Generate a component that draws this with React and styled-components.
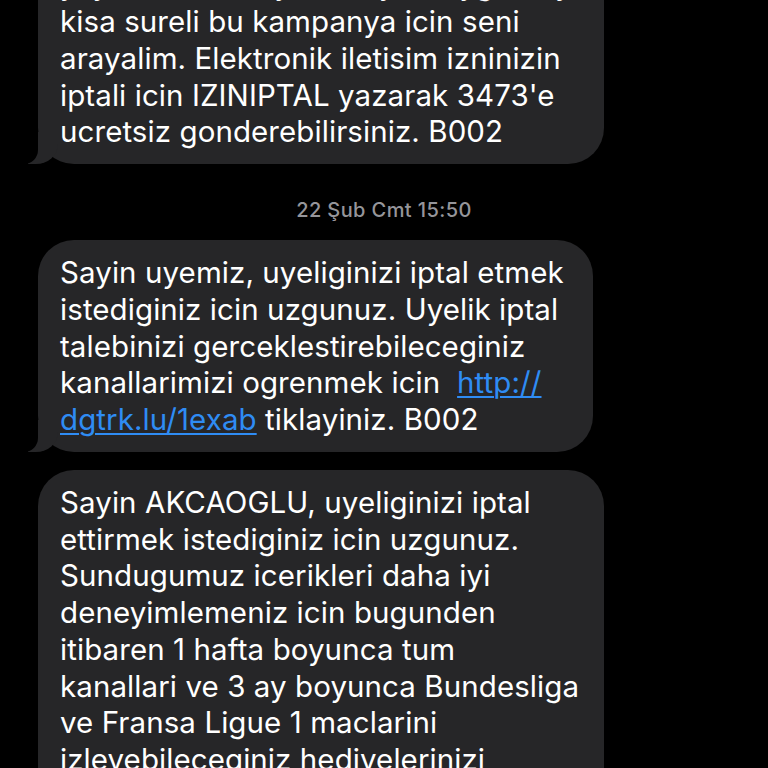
import React from "react";
import styled, { createGlobalStyle, css } from "styled-components";

const GlobalStyle = createGlobalStyle`
  html, body {
    margin: 0;
    padding: 0;
    background: #000;
  }
  body {
    font-family: Inter, "Noto Sans", "Liberation Sans", sans-serif;
    -webkit-font-smoothing: antialiased;
  }
`;

const Screen = styled.div`
  width: 768px;
  height: 768px;
  overflow: hidden;
  background: #000;
`;

const Thread = styled.div`
  display: flex;
  flex-direction: column;
  align-items: flex-start;
  margin-top: -84.5px;
`;

const tailStyles = css`
  &::before,
  &::after {
    content: "";
    position: absolute;
    bottom: 0;
    height: 32px;
  }
  &::before {
    left: -10px;
    width: 30px;
    background: #262628;
    border-bottom-right-radius: 22px 20px;
  }
  &::after {
    left: -36px;
    width: 36px;
    background: #000;
    border-bottom-right-radius: 14px;
  }
`;

const Bubble = styled.div`
  position: relative;
  box-sizing: border-box;
  width: ${(p) => p.$w}px;
  margin-left: 38px;
  margin-bottom: ${(p) => p.$mb || 0}px;
  padding: 14px 22px;
  border-radius: 36px;
  background: #262628;
  color: #fff;
  font-size: 29.5px;
  letter-spacing: 0.08px;
  line-height: 36.75px;
  white-space: nowrap;
  ${(p) => p.$tail && tailStyles}
`;

const Line = styled.div``;

const Link = styled.span`
  color: #2f8cf4;
  text-decoration: underline;
  text-decoration-thickness: 2px;
  text-underline-offset: 3px;
`;

const Stamp = styled.div`
  align-self: stretch;
  text-align: center;
  margin: 34px 0 18px;
  font-size: 20px;
  letter-spacing: 0.4px;
  line-height: 24px;
  font-weight: 500;
  color: #95959a;
`;

const b1 = [
  "Size ozel indirimli uyelik teklifimizle",
  "yayinlarimizi kaybetmeyin! Uygun fiyatli",
  "kisa sureli bu kampanya icin seni",
  "arayalim. Elektronik iletisim izninizin",
  "iptali icin IZINIPTAL yazarak 3473'e",
  "ucretsiz gonderebilirsiniz. B002",
];

const b3 = [
  "Sayin AKCAOGLU, uyeliginizi iptal",
  "ettirmek istediginiz icin uzgunuz.",
  "Sundugumuz icerikleri daha iyi",
  "deneyimlemeniz icin bugunden",
  "itibaren 1 hafta boyunca tum",
  "kanallari ve 3 ay boyunca Bundesliga",
  "ve Fransa Ligue 1 maclarini",
  "izleyebileceginiz hediyelerinizi",
  "tanimlamamizi istiyorsaniz EVET",
  "yazarak 3473'e gonderebilirsiniz.",
];

export default function App() {
  return (
    <>
      <GlobalStyle />
      <Screen>
        <Thread>
          <Bubble $w={566} $tail>
            {b1.map((l, i) => (
              <Line key={i}>{l}</Line>
            ))}
          </Bubble>
          <Stamp>22 Şub Cmt 15:50</Stamp>
          <Bubble $w={555} $mb={18} $tail>
            <Line>Sayin uyemiz, uyeliginizi iptal etmek</Line>
            <Line>istediginiz icin uzgunuz. Uyelik iptal</Line>
            <Line>talebinizi gerceklestirebileceginiz</Line>
            <Line>
              kanallarimizi ogrenmek icin&nbsp; <Link>http://</Link>
            </Line>
            <Line>
              <Link>dgtrk.lu/1exab</Link> tiklayiniz. B002
            </Line>
          </Bubble>
          <Bubble $w={566} $tail>
            {b3.map((l, i) => (
              <Line key={i}>{l}</Line>
            ))}
          </Bubble>
        </Thread>
      </Screen>
    </>
  );
}
